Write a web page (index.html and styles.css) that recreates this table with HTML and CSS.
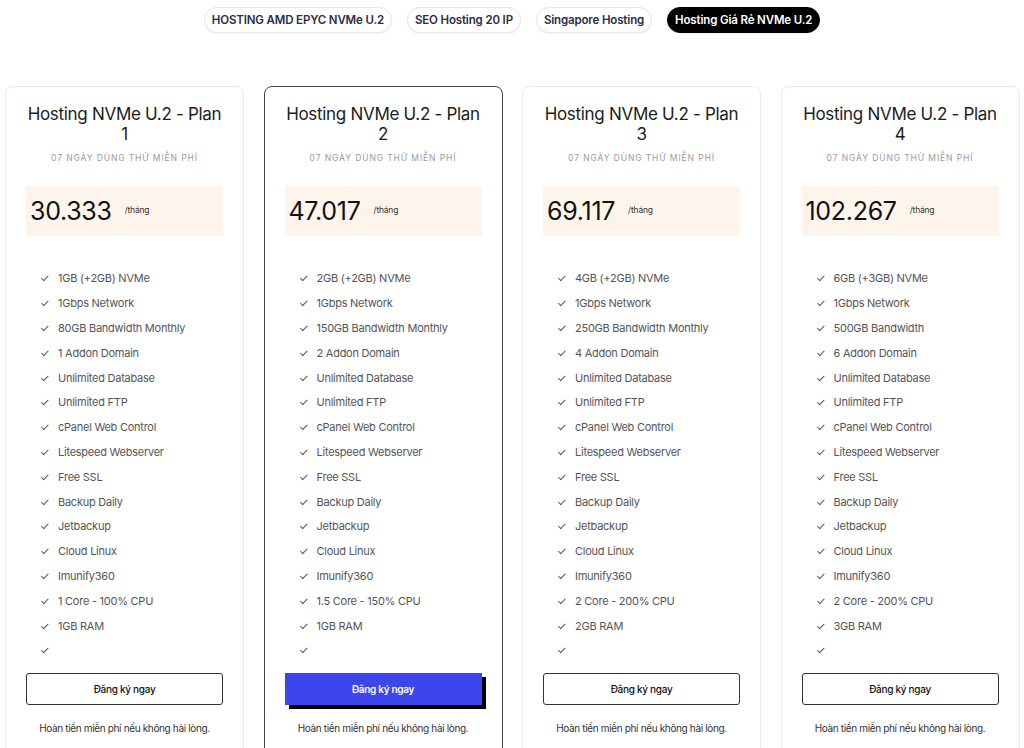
FILE: index.html
```html
<!DOCTYPE html>
<html lang="vi">
<head>
<meta charset="utf-8">
<title>Hosting Giá Rẻ NVMe U.2</title>
<link rel="stylesheet" href="styles.css">
</head>
<body>
<nav class="tabs">
  <a class="tab">HOSTING AMD EPYC NVMe U.2</a>
  <a class="tab">SEO Hosting 20 IP</a>
  <a class="tab">Singapore Hosting</a>
  <a class="tab tab-active">Hosting Giá Rẻ NVMe U.2</a>
</nav>

<main class="plans">
  <section class="card">
    <h2 class="card-title">Hosting NVMe U.2 - Plan<br>1</h2>
    <p class="card-sub">07 ngày dùng thử miễn phí</p>
    <div class="price"><span class="price-num">30.333</span><span class="price-unit">/tháng</span></div>
    <ul class="features">
      <li>1GB (+2GB) NVMe</li>
      <li>1Gbps Network</li>
      <li>80GB Bandwidth Monthly</li>
      <li>1 Addon Domain</li>
      <li>Unlimited Database</li>
      <li>Unlimited FTP</li>
      <li>cPanel Web Control</li>
      <li>Litespeed Webserver</li>
      <li>Free SSL</li>
      <li>Backup Daily</li>
      <li>Jetbackup</li>
      <li>Cloud Linux</li>
      <li>Imunify360</li>
      <li>1 Core - 100% CPU</li>
      <li>1GB RAM</li>
      <li class="empty"></li>
    </ul>
    <a class="btn">Đăng ký ngay</a>
    <p class="note">Hoàn tiền miễn phí nếu không hài lòng.</p>
  </section>

  <section class="card card-featured">
    <h2 class="card-title">Hosting NVMe U.2 - Plan<br>2</h2>
    <p class="card-sub">07 ngày dùng thử miễn phí</p>
    <div class="price"><span class="price-num">47.017</span><span class="price-unit">/tháng</span></div>
    <ul class="features">
      <li>2GB (+2GB) NVMe</li>
      <li>1Gbps Network</li>
      <li>150GB Bandwidth Monthly</li>
      <li>2 Addon Domain</li>
      <li>Unlimited Database</li>
      <li>Unlimited FTP</li>
      <li>cPanel Web Control</li>
      <li>Litespeed Webserver</li>
      <li>Free SSL</li>
      <li>Backup Daily</li>
      <li>Jetbackup</li>
      <li>Cloud Linux</li>
      <li>Imunify360</li>
      <li>1.5 Core - 150% CPU</li>
      <li>1GB RAM</li>
      <li class="empty"></li>
    </ul>
    <a class="btn btn-primary">Đăng ký ngay</a>
    <p class="note">Hoàn tiền miễn phí nếu không hài lòng.</p>
  </section>

  <section class="card">
    <h2 class="card-title">Hosting NVMe U.2 - Plan<br>3</h2>
    <p class="card-sub">07 ngày dùng thử miễn phí</p>
    <div class="price"><span class="price-num">69.117</span><span class="price-unit">/tháng</span></div>
    <ul class="features">
      <li>4GB (+2GB) NVMe</li>
      <li>1Gbps Network</li>
      <li>250GB Bandwidth Monthly</li>
      <li>4 Addon Domain</li>
      <li>Unlimited Database</li>
      <li>Unlimited FTP</li>
      <li>cPanel Web Control</li>
      <li>Litespeed Webserver</li>
      <li>Free SSL</li>
      <li>Backup Daily</li>
      <li>Jetbackup</li>
      <li>Cloud Linux</li>
      <li>Imunify360</li>
      <li>2 Core - 200% CPU</li>
      <li>2GB RAM</li>
      <li class="empty"></li>
    </ul>
    <a class="btn">Đăng ký ngay</a>
    <p class="note">Hoàn tiền miễn phí nếu không hài lòng.</p>
  </section>

  <section class="card">
    <h2 class="card-title">Hosting NVMe U.2 - Plan<br>4</h2>
    <p class="card-sub">07 ngày dùng thử miễn phí</p>
    <div class="price"><span class="price-num">102.267</span><span class="price-unit">/tháng</span></div>
    <ul class="features">
      <li>6GB (+3GB) NVMe</li>
      <li>1Gbps Network</li>
      <li>500GB Bandwidth</li>
      <li>6 Addon Domain</li>
      <li>Unlimited Database</li>
      <li>Unlimited FTP</li>
      <li>cPanel Web Control</li>
      <li>Litespeed Webserver</li>
      <li>Free SSL</li>
      <li>Backup Daily</li>
      <li>Jetbackup</li>
      <li>Cloud Linux</li>
      <li>Imunify360</li>
      <li>2 Core - 200% CPU</li>
      <li>3GB RAM</li>
      <li class="empty"></li>
    </ul>
    <a class="btn">Đăng ký ngay</a>
    <p class="note">Hoàn tiền miễn phí nếu không hài lòng.</p>
  </section>
</main>
</body>
</html>
```

FILE: styles.css
```css
* { box-sizing: border-box; }

html, body {
  margin: 0;
  padding: 0;
  background: #ffffff;
  font-family: Inter, "Noto Sans", "Liberation Sans", sans-serif;
  color: #222;
  overflow: hidden;
}

.tabs {
  display: flex;
  justify-content: center;
  gap: 15px;
  padding-top: 7px;
  height: 33px;
}

.tab {
  display: inline-flex;
  align-items: center;
  height: 26px;
  padding: 0 7px;
  border: 1px solid #e6e6ec;
  border-radius: 13px;
  box-shadow: 0 1px 2px rgba(0, 0, 0, 0.06);
  font-size: 11.5px;
  font-weight: 600;
  letter-spacing: -0.15px;
  color: #2b2d42;
  background: #fff;
  white-space: nowrap;
}

.tab-active {
  background: #000;
  color: #fff;
  border-color: #000;
}

.plans {
  display: flex;
  gap: 19.5px;
  padding: 0 5px;
  margin-top: 53px;
  align-items: flex-start;
}

.card {
  flex: 0 0 239px;
  border: 1px solid #ececec;
  border-radius: 8px;
  padding: 17px 20px 40px;
  background: #fff;
}

.card-featured {
  border: 1.5px solid #444;
}

.card-title {
  margin: 0 -2px;
  font-size: 17px;
  line-height: 20px;
  font-weight: 400;
  letter-spacing: -0.3px;
  text-align: center;
  color: #1c1c1c;
}

.card-sub {
  margin: 8px 0 0;
  font-size: 8.5px;
  line-height: 12px;
  letter-spacing: 0.9px;
  text-transform: uppercase;
  text-align: center;
  color: #9a9a9a;
}

.price {
  margin-top: 22px;
  height: 50px;
  background: #fdf5eb;
  display: flex;
  align-items: center;
  padding-left: 4px;
}

.price-num {
  font-size: 25px;
  letter-spacing: -0.3px;
  color: #111;
}

.price-unit {
  margin-left: 13px;
  font-size: 8.5px;
  color: #333;
  letter-spacing: -0.2px;
  position: relative;
  top: -1px;
}

.features {
  list-style: none;
  margin: 30px 0 0;
  padding: 0 0 0 16px;
}

.features li {
  display: flex;
  align-items: center;
  height: 24.8px;
  font-size: 11px;
  letter-spacing: -0.25px;
  color: #555;
}

.features li::before {
  content: "";
  flex: 0 0 6px;
  width: 6px;
  height: 3px;
  margin-right: 9px;
  border-left: 1.2px solid #555;
  border-bottom: 1.2px solid #555;
  transform: rotate(-45deg) translateY(-1px);
}

.btn {
  display: flex;
  align-items: center;
  justify-content: center;
  margin-top: 10px;
  height: 32px;
  border: 1px solid #333;
  border-radius: 3px;
  font-size: 10px;
  font-weight: 500;
  letter-spacing: -0.3px;
  color: #111;
  background: #fff;
}

.btn-primary {
  background: #3d46ea;
  border-color: #3d46ea;
  border-radius: 0;
  color: #fff;
  font-weight: 600;
  box-shadow: 4px 4px 0 #000;
}

.note {
  margin: 16px 0 0;
  font-size: 10px;
  line-height: 14px;
  letter-spacing: -0.35px;
  text-align: center;
  color: #333;
}
```
